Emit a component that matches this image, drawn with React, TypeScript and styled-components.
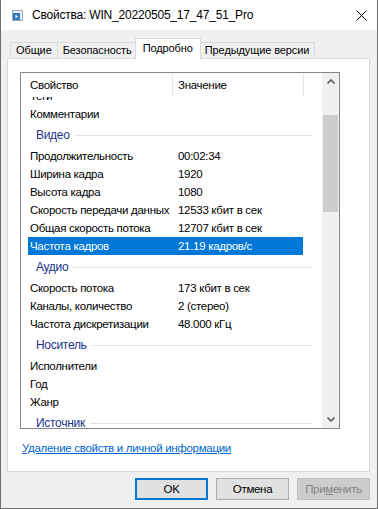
import { useLayoutEffect, useRef } from 'react';
import styled, { createGlobalStyle } from 'styled-components';

type Item = { label: string; value?: string; selected?: boolean };
type Group = { title: string; items: Item[] };

const groups: Group[] = [
  {
    title: 'Описание',
    items: [
      { label: 'Название' },
      { label: 'Подзаголовок' },
      { label: 'Оценка' },
      { label: 'Теги' },
      { label: 'Комментарии' },
    ],
  },
  {
    title: 'Видео',
    items: [
      { label: 'Продолжительность', value: '00:02:34' },
      { label: 'Ширина кадра', value: '1920' },
      { label: 'Высота кадра', value: '1080' },
      { label: 'Скорость передачи данных', value: '12533 кбит в сек' },
      { label: 'Общая скорость потока', value: '12707 кбит в сек' },
      { label: 'Частота кадров', value: '21.19 кадров/с', selected: true },
    ],
  },
  {
    title: 'Аудио',
    items: [
      { label: 'Скорость потока', value: '173 кбит в сек' },
      { label: 'Каналы, количество', value: '2 (стерео)' },
      { label: 'Частота дискретизации', value: '48.000 кГц' },
    ],
  },
  {
    title: 'Носитель',
    items: [{ label: 'Исполнители' }, { label: 'Год' }, { label: 'Жанр' }],
  },
  {
    title: 'Источник',
    items: [
      { label: 'Режиссеры' },
      { label: 'Продюсеры' },
      { label: 'Авторы сценария' },
      { label: 'Издатель' },
    ],
  },
];

// how far the list is scrolled down
const SCROLL_TOP = 88;

const GlobalStyle = createGlobalStyle`
  * { box-sizing: border-box; }
  html, body {
    margin: 0;
    padding: 0;
    background: #f0f0f0;
  }
  body {
    font-family: 'Segoe UI', 'Liberation Sans', Arial, sans-serif;
    font-size: 11.5px;
    letter-spacing: -0.3px;
    color: #000;
  }
`;

const Window = styled.div`
  width: 378px;
  height: 509px;
  display: flex;
  flex-direction: column;
  background: #f0f0f0;
  border: 1px solid #6f6f6f;
  border-top: none;
`;

const TitleBar = styled.div`
  height: 30px;
  flex-shrink: 0;
  display: flex;
  align-items: center;
  padding-left: 11px;
  background: #fff;
`;

const TitleText = styled.span`
  margin-left: 9px;
  font-size: 12px;
  letter-spacing: -0.2px;
  white-space: nowrap;
`;

const CloseButton = styled.div`
  margin-left: auto;
  width: 32px;
  height: 30px;
  display: flex;
  align-items: center;
  justify-content: center;
`;

const Body = styled.div`
  flex: 1;
  display: flex;
  flex-direction: column;
  padding: 8px 7px 0 6px;
`;

const TabRow = styled.div`
  height: 21px;
  display: flex;
  align-items: flex-end;
  padding-left: 3px;
  margin-bottom: -1px;
  position: relative;
  z-index: 1;
`;

const Tab = styled.div<{ $active?: boolean }>`
  height: ${({ $active }) => ($active ? '21px' : '16px')};
  margin: ${({ $active }) => ($active ? '0 -2px 0 -2px' : '0 -1px 1px 0')};
  padding: ${({ $active }) => ($active ? '2px 7px 0' : '0 5px')};
  position: relative;
  z-index: ${({ $active }) => ($active ? 2 : 1)};
  border: 1px solid #d9d9d9;
  border-bottom: none;
  background: ${({ $active }) => ($active ? '#fff' : '#f0f0f0')};
  font-size: 11px;
  letter-spacing: -0.1px;
  line-height: 15px;
  white-space: nowrap;
`;

const Panel = styled.div`
  height: 414px;
  flex-shrink: 0;
  background: #fff;
  border: 1px solid #d9d9d9;
  padding: 13px 0 0 12px;
  display: flex;
  flex-direction: column;
`;

const ListBox = styled.div`
  width: 320px;
  height: 357px;
  border: 1px solid #828790;
  display: flex;
  background: #fff;
`;

const ListMain = styled.div`
  flex: 1;
  min-width: 0;
  display: flex;
  flex-direction: column;
`;

const Header = styled.div`
  height: 24px;
  flex-shrink: 0;
  display: flex;
  background: #fff;
`;

const HeaderCell = styled.div<{ $width: number; $pad: number }>`
  width: ${({ $width }) => $width}px;
  padding-left: ${({ $pad }) => $pad}px;
  margin-top: 1px;
  height: 22px;
  line-height: 22px;
  border-right: 1px solid #e5e5e5;
`;

const Rows = styled.div`
  flex: 1;
  overflow: hidden;
`;

const GroupHeader = styled.div`
  height: 24px;
  display: flex;
  align-items: center;
  padding: 0 9px 0 15px;
  color: #1e3287;
  font-size: 12px;
`;

const GroupLine = styled.div`
  flex: 1;
  height: 1px;
  margin: 1px 0 0 5px;
  background: #e2e2e2;
`;

const Row = styled.div<{ $selected?: boolean }>`
  height: 18px;
  width: 275px;
  margin-left: 7px;
  display: flex;
  align-items: center;
  background: ${({ $selected }) => ($selected ? '#0078d7' : 'transparent')};
  color: ${({ $selected }) => ($selected ? '#fff' : '#000')};
  white-space: nowrap;
`;

const LabelCell = styled.div`
  width: 144px;
  padding-left: 2px;
  overflow: hidden;
`;

const ValueCell = styled.div`
  padding-left: 6px;
`;

const ScrollBar = styled.div`
  width: 17px;
  flex-shrink: 0;
  display: flex;
  flex-direction: column;
  background: #f0f0f0;
`;

const ArrowButton = styled.div`
  height: 17px;
  display: flex;
  align-items: center;
  justify-content: center;
`;

const Track = styled.div`
  flex: 1;
`;

const Thumb = styled.div`
  margin: 25px 1px 0;
  height: 97px;
  background: #cdcdcd;
`;

const InfoLink = styled.a`
  margin: 11px 0 0 2px;
  align-self: flex-start;
  color: #0066cc;
  text-decoration: underline;
  line-height: 16px;
  cursor: pointer;
`;

const ButtonRow = styled.div`
  margin-top: 6px;
  display: flex;
  justify-content: flex-end;
  gap: 8px;
`;

const Button = styled.button<{ $default?: boolean }>`
  width: 73px;
  height: 22px;
  padding: 0;
  font: inherit;
  letter-spacing: inherit;
  color: #000;
  background: #e1e1e1;
  border: 1px solid ${({ $default }) => ($default ? '#0078d7' : '#adadad')};
  box-shadow: ${({ $default }) => ($default ? 'inset 0 0 0 1px #0078d7' : 'none')};

  &:disabled {
    background: #cccccc;
    border-color: #bfbfbf;
    color: #838383;
  }
`;

const AccessKey = styled.span`
  text-decoration: underline;
`;

const FileIcon = () => (
  <svg width="11" height="11" viewBox="0 0 11 11">
    <rect x="0.5" y="0.5" width="10" height="10" fill="#e9eef4" stroke="#9aa8b8" />
    <rect x="1" y="3" width="7" height="7" fill="#2a78c0" />
    <path d="M3.5 4.8 L6.2 6.5 L3.5 8.2 Z" fill="#fff" />
  </svg>
);

const CloseIcon = () => (
  <svg width="11" height="11" viewBox="0 0 11 11">
    <path d="M0.5 0.5 L10.5 10.5 M10.5 0.5 L0.5 10.5" stroke="#000" strokeWidth="1" fill="none" />
  </svg>
);

const Chevron = ({ down }: { down?: boolean }) => (
  <svg width="8" height="5" viewBox="0 0 8 5">
    <path
      d={down ? 'M0.5 0.5 L4 4 L7.5 0.5' : 'M0.5 4.5 L4 1 L7.5 4.5'}
      stroke="#606060"
      strokeWidth="1.6"
      fill="none"
    />
  </svg>
);

const App = () => {
  const rowsRef = useRef<HTMLDivElement>(null);

  useLayoutEffect(() => {
    if (rowsRef.current) rowsRef.current.scrollTop = SCROLL_TOP;
  }, []);

  return (
    <>
      <GlobalStyle />
      <Window>
        <TitleBar>
          <FileIcon />
          <TitleText>Свойства: WIN_20220505_17_47_51_Pro</TitleText>
          <CloseButton>
            <CloseIcon />
          </CloseButton>
        </TitleBar>
        <Body>
          <TabRow>
            <Tab>Общие</Tab>
            <Tab>Безопасность</Tab>
            <Tab $active>Подробно</Tab>
            <Tab>Предыдущие версии</Tab>
          </TabRow>
          <Panel>
            <ListBox>
              <ListMain>
                <Header>
                  <HeaderCell $width={152} $pad={9}>
                    Свойство
                  </HeaderCell>
                  <HeaderCell $width={131} $pad={5}>
                    Значение
                  </HeaderCell>
                </Header>
                <Rows ref={rowsRef}>
                  {groups.map((g) => (
                    <div key={g.title}>
                      <GroupHeader>
                        {g.title}
                        <GroupLine />
                      </GroupHeader>
                      {g.items.map((it) => (
                        <Row key={it.label} $selected={it.selected}>
                          <LabelCell>{it.label}</LabelCell>
                          <ValueCell>{it.value}</ValueCell>
                        </Row>
                      ))}
                    </div>
                  ))}
                </Rows>
              </ListMain>
              <ScrollBar>
                <ArrowButton>
                  <Chevron />
                </ArrowButton>
                <Track>
                  <Thumb />
                </Track>
                <ArrowButton>
                  <Chevron down />
                </ArrowButton>
              </ScrollBar>
            </ListBox>
            <InfoLink>Удаление свойств и личной информации</InfoLink>
          </Panel>
          <ButtonRow>
            <Button $default>OK</Button>
            <Button>Отмена</Button>
            <Button disabled>
              При<AccessKey>м</AccessKey>енить
            </Button>
          </ButtonRow>
        </Body>
      </Window>
    </>
  );
};

export default App;
